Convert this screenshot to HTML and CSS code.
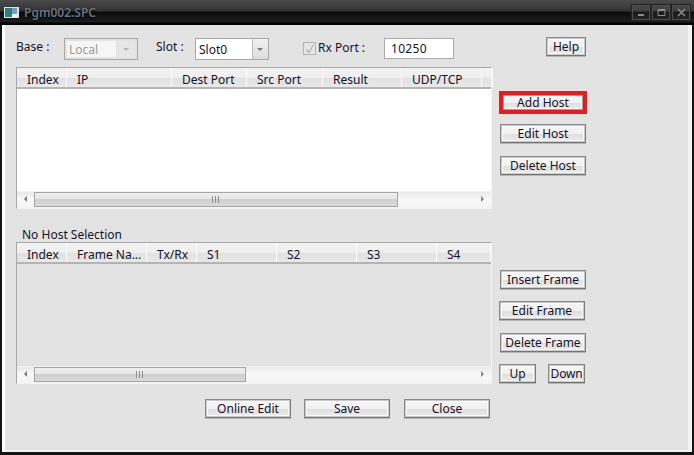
FILE: index.html
```html
<!DOCTYPE html>
<html lang="en">
<head>
<meta charset="utf-8">
<title>Pgm002.SPC</title>
<link rel="stylesheet" href="styles.css">
</head>
<body>
<div class="window">
  <header class="titlebar">
    <svg class="app-icon" width="15" height="11" viewBox="0 0 15 11"><rect width="15" height="11" fill="#d8e4e8"/><rect x="1" y="1" width="7" height="9" fill="#2f7f78"/><rect x="8" y="1" width="5" height="6" fill="#6fa0c8"/><rect x="8" y="7" width="5" height="3" fill="#f0f4f4"/></svg>
    <span class="title">Pgm002.SPC</span>
    <div class="win-controls">
      <span class="win-btn"><svg width="16" height="13" viewBox="0 0 16 13"><rect x="5" y="8" width="6" height="2" fill="#8c8c8c"/></svg></span>
      <span class="win-btn"><svg width="16" height="13" viewBox="0 0 16 13"><path d="M5 3.5h7v6h-7z M5 4.5h7" fill="none" stroke="#8c8c8c"/></svg></span>
      <span class="win-btn"><svg width="16" height="13" viewBox="0 0 16 13"><path d="M5 3l7 7M12 3l-7 7" fill="none" stroke="#8c8c8c" stroke-width="1.5"/></svg></span>
    </div>
  </header>
  <div class="client">
    <div class="toprow">
      <label class="lbl lbl-base">Base :</label>
      <div class="combo combo-off"><span class="combo-text">Local</span><span class="combo-arrow"></span></div>
      <label class="lbl lbl-slot">Slot :</label>
      <div class="combo"><span class="combo-text">Slot0</span><span class="combo-arrow"></span></div>
      <span class="check"><svg width="10" height="10" viewBox="0 0 10 10"><path d="M1.5 5.5l2.5 3 4.5-8" fill="none" stroke="#b0b0b0" stroke-width="1.2"/></svg></span>
      <label class="lbl lbl-rx">Rx Port :</label>
      <div class="textbox">10250</div>
      <button class="btn btn-help">Help</button>
    </div>
    <div class="main">
      <div class="left">
        <section class="table table-host">
          <div class="thead thead-host">
            <span>Index</span><span>IP</span><span>Dest Port</span><span>Src Port</span><span>Result</span><span>UDP/TCP</span><span></span>
          </div>
          <div class="tbody"></div>
          <div class="hscroll">
            <span class="arrow arrow-l"></span>
            <div class="track"><div class="thumb thumb-host"><i></i><i></i><i></i></div></div>
            <span class="arrow arrow-r"></span>
          </div>
        </section>
        <div class="selection">No Host Selection</div>
        <section class="table table-frame">
          <div class="thead thead-frame">
            <span>Index</span><span>Frame Na...</span><span>Tx/Rx</span><span>S1</span><span>S2</span><span>S3</span><span>S4</span>
          </div>
          <div class="tbody"></div>
          <div class="hscroll">
            <span class="arrow arrow-l"></span>
            <div class="track"><div class="thumb thumb-frame"><i></i><i></i><i></i></div></div>
            <span class="arrow arrow-r"></span>
          </div>
        </section>
      </div>
      <div class="right">
        <div class="focus-ring"><button class="btn btn-inner">Add Host</button></div>
        <button class="btn btn-side edit-host">Edit Host</button>
        <button class="btn btn-side delete-host">Delete Host</button>
        <button class="btn btn-side insert-frame">Insert Frame</button>
        <button class="btn btn-side edit-frame">Edit Frame</button>
        <button class="btn btn-side delete-frame">Delete Frame</button>
        <div class="updown">
          <button class="btn btn-small">Up</button>
          <button class="btn btn-small btn-down">Down</button>
        </div>
      </div>
    </div>
    <div class="bottom">
      <button class="btn btn-side">Online Edit</button>
      <button class="btn btn-side">Save</button>
      <button class="btn btn-side btn-close">Close</button>
    </div>
  </div>
</div>
</body>
</html>
```
FILE: styles.css
```css
* { box-sizing: border-box; }
html, body { margin: 0; height: 100%; }
body {
  background: #141414;
  font-family: "Noto Sans", "DejaVu Sans", sans-serif;
  font-size: 12px;
  color: #14142a;
  overflow: hidden;
}
.window { width: 694px; height: 455px; display: flex; flex-direction: column; }
.titlebar {
  height: 25px;
  display: flex;
  align-items: flex-start;
  padding-left: 4px;
  background: linear-gradient(#4a4a4a 0, #333 11px, #0a0a0a 12px, #1e1e1e 22px, #000 23px, #000 25px);
}
.app-icon { margin-top: 7px; }
.title {
  margin: 4px 0 0 5px;
  font-size: 12px;
  font-weight: 600;
  line-height: 17px;
  color: #6a7480;
  text-shadow: 0 1px 2px #000;
}
.win-controls { margin: 5px 4px 0 auto; display: flex; gap: 2px; }
.win-btn {
  width: 18px;
  height: 15px;
  border: 1px solid #4e4e4e;
  background: rgba(255,255,255,.06);
  box-shadow: 0 0 0 1px #222;
  display: flex;
  align-items: center;
  justify-content: center;
}
.client {
  width: 690px;
  height: 427px;
  margin-left: 2px;
  border-left: 3px solid #fff;
  border-right: 4px solid #f2f2f2;
  border-bottom: 2px solid #f2f2f2;
  background: #e3e3e3;
  padding: 12px 0 0 11px;
}
.toprow { height: 30px; display: flex; align-items: flex-start; }
.lbl { line-height: 16px; margin-top: 2px; white-space: nowrap; }
.lbl-base { width: 48px; }
.lbl-slot { width: 39px; margin-left: 18px; }
.lbl-rx { width: 66px; margin: 3px 0 0 2px; }
.combo {
  width: 74px;
  height: 22px;
  margin-top: 1px;
  border: 1px solid #a8a8a8;
  background: #fff;
  display: flex;
}
.combo-text { flex: 1; padding-left: 3px; line-height: 21px; }
.combo-arrow {
  width: 16px;
  background: linear-gradient(#f2f2f2, #dcdcdc);
  border-left: 1px solid #bdbdbd;
  position: relative;
}
.combo-arrow::after {
  content: "";
  position: absolute;
  left: 4px;
  top: 9px;
  border: 3px solid transparent;
  border-top: 3px solid #777;
  border-bottom: 0;
}
.combo-off { background: #e3e3e3; padding: 2px; color: #9a9a9a; }
.combo-off .combo-text { background: #f6f6f6; line-height: 18px; padding-left: 2px; margin-right: 3px; }
.combo-off .combo-arrow { background: #e6e6e6; border-left: 0; }
.combo-off .combo-arrow::after { top: 7px; border-top-color: #b5b5b5; }
.check {
  width: 13px;
  height: 13px;
  margin: 5px 0 0 34px;
  border: 1px solid #b4b4b4;
  background: #e6e6e6;
  display: flex;
  align-items: center;
  justify-content: center;
}
.textbox {
  width: 70px;
  height: 21px;
  margin-top: 1px;
  border: 1px solid #aaa;
  background: #fff;
  padding-left: 6px;
  line-height: 19px;
  letter-spacing: .3px;
}
.btn {
  font: inherit;
  color: inherit;
  height: 19px;
  padding: 0;
  border: 1px solid #8a8a8a;
  border-bottom-color: #777;
  border-right-color: #7d7d7d;
  background: linear-gradient(#f5f5f5 0, #f1f1f1 50%, #dedede 52%, #ececec 100%);
  box-shadow: inset 0 0 0 1px #c8c8c8, inset 0 0 0 2px #fafafa, 0 1px 0 #b5b5b5;
  line-height: 16px;
  white-space: nowrap;
}
.btn-help { width: 40px; margin-left: 92px; }
.main { display: grid; grid-template-columns: 476px 1fr; }
.left { display: flex; flex-direction: column; }
.table { height: 142px; display: flex; flex-direction: column; border: 1px solid #f4f4f4; border-left-color: #a8a8a8; border-top-color: #a8a8a8; }
.table-host .tbody { background: #fff; }
.tbody { flex: 1; }
.thead {
  height: 21px;
  display: grid;
  border-bottom: 2px solid #b4b4b4;
  background: linear-gradient(#f2f2f2 0, #efefef 50%, #e1e1e1 55%, #e9e9e9 100%);
}
.thead-host { grid-template-columns: 50px 105px 75px 76px 79px 80px 1fr; }
.thead-frame { grid-template-columns: 50px 80px 50px 80px 80px 80px 1fr; }
.thead span {
  border-right: 1px solid #fbfbfb;
  padding-left: 10px;
  line-height: 23px;
  white-space: nowrap;
  overflow: hidden;
}
.hscroll {
  height: 17px;
  display: flex;
  align-items: stretch;
  background: linear-gradient(#e9e9e9, #f8f8f8 45%, #f4f4f4);
  border-top: 1px solid #f2f2f2;
}
.arrow { width: 17px; position: relative; flex: none; }
.arrow::after {
  content: "";
  position: absolute;
  top: 4px;
  border: 3px solid transparent;
}
.arrow-l::after { left: 7px; border-left: 0; border-right: 3px solid #777; }
.arrow-r::after { left: 7px; border-right: 0; border-left: 3px solid #888; }
.track { flex: 1; display: flex; }
.thumb {
  height: 15px;
  display: flex;
  justify-content: center;
  align-items: center;
  gap: 2px;
  padding-right: 2px;
  border: 1px solid #a6a6a6;
  background: linear-gradient(#ededed 0, #e8e8e8 45%, #cfcfcf 50%, #dadada 100%);
}
.thumb i { width: 1px; height: 7px; background: #8f8f8f; }
.thumb-host { width: 364px; }
.thumb-frame { width: 212px; }
.selection { height: 33px; padding: 0 0 0 6px; line-height: 15px; display: flex; align-items: flex-end; }
.right { display: flex; flex-direction: column; align-items: flex-start; padding: 24px 0 0 7px; }
.focus-ring { width: 88px; height: 23px; border: 4px solid #e81c1c; }
.btn-inner { width: 80px; height: 15px; display: block; line-height: 12px; box-shadow: inset 0 0 0 1px #fafafa; border-color: #a0a0a0; }
.btn-side { width: 86px; }
.edit-host { margin: 10px 0 0 1px; }
.delete-host { margin: 13px 0 0 1px; }
.insert-frame { margin: 95px 0 0 1px; }
.edit-frame { margin: 12px 0 0 0; }
.delete-frame { margin: 13px 0 0 1px; }
.updown { margin-top: 12px; width: 86px; display: flex; justify-content: space-between; }
.btn-small { width: 37px; }
.btn-down { letter-spacing: -.2px; }
.bottom { margin: 15px 0 0 189px; display: flex; gap: 13px; }
.btn-close { margin-left: 1px; }
```
